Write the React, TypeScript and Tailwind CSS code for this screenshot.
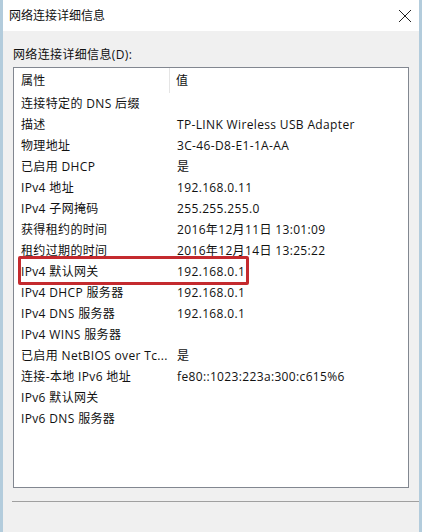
import React from "react";

const rows: [string, string][] = [
  ["连接特定的 DNS 后缀", ""],
  ["描述", "TP-LINK Wireless USB Adapter"],
  ["物理地址", "3C-46-D8-E1-1A-AA"],
  ["已启用 DHCP", "是"],
  ["IPv4 地址", "192.168.0.11"],
  ["IPv4 子网掩码", "255.255.255.0"],
  ["获得租约的时间", "2016年12月11日 13:01:09"],
  ["租约过期的时间", "2016年12月14日 13:25:22"],
  ["IPv4 默认网关", "192.168.0.1"],
  ["IPv4 DHCP 服务器", "192.168.0.1"],
  ["IPv4 DNS 服务器", "192.168.0.1"],
  ["IPv4 WINS 服务器", ""],
  ["已启用 NetBIOS over Tc...", "是"],
  ["连接-本地 IPv6 地址", "fe80::1023:223a:300:c615%6"],
  ["IPv6 默认网关", ""],
  ["IPv6 DNS 服务器", ""],
];

const font = {
  fontFamily: '"Open Sans", "Noto Sans CJK SC", sans-serif',
};

const App = () => {
  return (
    <div
      className="w-[422px] h-[532px] flex flex-col bg-[#f0f0f0] border-l-[3px] border-r-[3px] border-[#b3ccdc] text-[12px] text-[#111] tracking-[0.35px]"
      style={font}
    >
      {/* title bar */}
      <div className="h-[31px] shrink-0 bg-white flex items-center justify-between pl-[6px] pr-[6px]">
        <span className="leading-[16px] tracking-normal">网络连接详细信息</span>
        <svg width="14" height="14" viewBox="0 0 14 14" className="mr-[1px]">
          <path d="M1 1 L13 13 M13 1 L1 13" stroke="#222" strokeWidth="1" />
        </svg>
      </div>

      <div className="pl-[10px] pr-[10px] pt-[16px]">
        <div className="leading-[16px] mb-[4px]">网络连接详细信息(D):</div>
        <div className="w-[396px] h-[421px] bg-white border border-[#828790]">
          {/* header */}
          <div className="flex h-[25px] items-center">
            <div className="w-[156px] h-full pl-[7px] flex items-center border-r border-[#e5e5e5]">
              属性
            </div>
            <div className="pl-[6px]">值</div>
          </div>
          <div className="flex flex-col">
            {rows.map(([k, v], i) => (
              <div key={i} className="flex h-[21px] items-center relative">
                <div className="w-[157px] pl-[7px] whitespace-nowrap">{k}</div>
                <div className="pl-[6px] whitespace-nowrap">{v}</div>
                {i === 8 && (
                  <div className="absolute left-[4px] top-[-5px] w-[231px] h-[29px] border-[3px] border-[#c42a2e] rounded-[2px]" />
                )}
              </div>
            ))}
          </div>
        </div>
      </div>
      <div className="mt-[13px] ml-[9px] border-t border-[#a0a0a0]" />
    </div>
  );
};

export default App;
